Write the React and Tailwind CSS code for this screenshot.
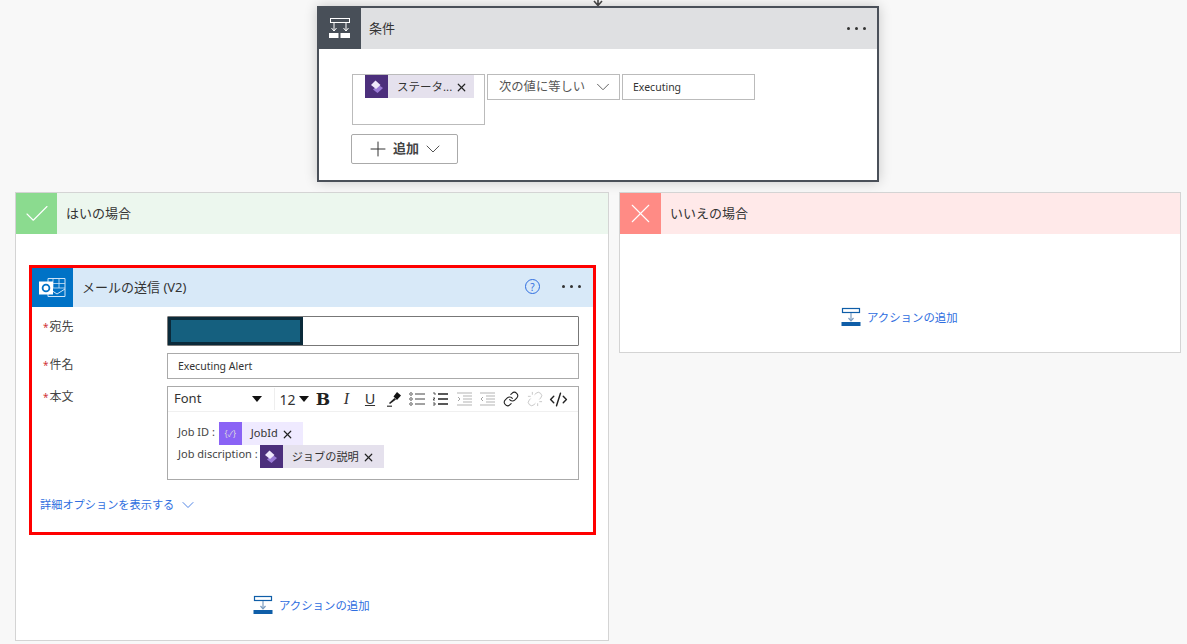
import { ChevronDown, Check, X, Plus, Link, Unlink, CodeXml } from 'lucide-react';

const FONT = "font-['Noto_Sans','Noto_Sans_CJK_JP',sans-serif]";

const PowerAppsIcon = () => (
  <svg width="14" height="14" viewBox="0 0 14 14">
    <path d="M8 4.5 L13 8 L7.5 13 L3 9.5 Z" fill="#9a7bd6" />
    <path d="M5.5 0.5 L10.5 5 L6 9 L1 5 Z" fill="#efe8fb" />
  </svg>
);

const ActionIcon = () => (
  <svg width="20" height="20" viewBox="0 0 20 20" className="shrink-0">
    <rect x="1.5" y="1.5" width="17" height="4" fill="none" stroke="#0f5ea8" strokeWidth="1.2" />
    <path d="M10 6 V13.5" stroke="#7a9cc0" strokeWidth="1.2" />
    <path d="M7.5 11 L10 13.8 L12.5 11" fill="none" stroke="#7a9cc0" strokeWidth="1.2" />
    <rect x="0.5" y="15" width="19" height="4" fill="#0f5ea8" />
  </svg>
);

const ConditionIcon = () => (
  <svg width="24" height="24" viewBox="0 0 24 24">
    <rect x="2.5" y="1.5" width="19" height="4" fill="none" stroke="#fff" strokeWidth="1" />
    <path d="M6 6 V14 M18 6 V14" stroke="#fff" strokeWidth="1" />
    <path d="M3.5 11 L6 14 L8.5 11 M15.5 11 L18 14 L20.5 11" fill="none" stroke="#fff" strokeWidth="1" />
    <rect x="1" y="16" width="9.5" height="5" fill="#fff" />
    <rect x="12.5" y="16" width="9.5" height="5" fill="#fff" />
  </svg>
);

const OutlookIcon = () => (
  <svg width="27" height="24" viewBox="0 0 27 24">
    <path d="M9 2.5 H26 V20.5 H9 Z" fill="none" stroke="#cfe4f7" strokeWidth="1" />
    <path d="M14 3 V12 M20 3 V12 M14 7.5 H26 M14 12 H26" stroke="#cfe4f7" strokeWidth="0.8" />
    <path d="M12 14 L18 18 L26 13" fill="none" stroke="#cfe4f7" strokeWidth="1" />
    <rect x="0" y="5.5" width="14" height="13" fill="#fff" />
    <circle cx="7" cy="12" r="3.4" fill="none" stroke="#0072c6" strokeWidth="1.8" />
  </svg>
);

const Dots = ({ color = '#333' }) => (
  <div className="flex gap-[5px]">
    {[0, 1, 2].map((i) => (
      <span key={i} className="w-[3px] h-[3px] rounded-full" style={{ backgroundColor: color }} />
    ))}
  </div>
);

const Token = ({ label, width, textClass }) => (
  <div className="flex items-center bg-[#e5e1ed] h-[23px]" style={{ width }}>
    <div className="w-[23px] h-[23px] bg-[#4c2f7c] flex items-center justify-center shrink-0">
      <PowerAppsIcon />
    </div>
    <span className={`ml-[9px] leading-none text-[#333] whitespace-nowrap ${textClass}`}>{label}</span>
    <X size={13} strokeWidth={2.2} className="ml-[3px] text-[#222] mt-[2px]" />
  </div>
);

const AddAction = ({ className }) => (
  <div className={`flex items-center gap-[6px] ${className}`}>
    <ActionIcon />
    <span className="text-[11.4px] mt-[1px] text-[#2f6ee0]">アクションの追加</span>
  </div>
);

const ToolBtn = ({ children, className = '' }) => (
  <div className={`h-[22px] w-[22px] flex items-center justify-center bg-white shrink-0 ${className}`}>{children}</div>
);

const ListIcon = ({ color = '#444' }) => (
  <svg width="17" height="16" viewBox="0 0 17 16">
    <circle cx="2" cy="3" r="1.3" fill="none" stroke={color} strokeWidth="0.8" />
    <circle cx="2" cy="8" r="1.3" fill="none" stroke={color} strokeWidth="0.8" />
    <circle cx="2" cy="13" r="1.3" fill="none" stroke={color} strokeWidth="0.8" />
    <path d="M6 3 H16 M6 8 H16 M6 13 H16" stroke={color} strokeWidth="1" />
  </svg>
);

const NumListIcon = () => (
  <svg width="17" height="16" viewBox="0 0 17 16">
    <path d="M1 2 H3 V4 M1 7 H3 L1 9 H3 M1 12 H3 V14 H1" fill="none" stroke="#333" strokeWidth="0.8" />
    <path d="M6 3 H16 M6 8 H16 M6 13 H16" stroke="#222" strokeWidth="1.3" />
  </svg>
);

const IndentIcon = ({ flip }) => (
  <svg width="17" height="16" viewBox="0 0 17 16">
    <path d="M1 2 H16 M7 5 H16 M7 8 H16 M7 11 H16 M1 14 H16" stroke="#aaa" strokeWidth="0.9" />
    <path d={flip ? 'M4 6 L2 8 L4 10' : 'M2 6 L4 8 L2 10'} fill="none" stroke="#999" strokeWidth="0.9" />
  </svg>
);

const PenIcon = () => (
  <svg width="16" height="16" viewBox="0 0 16 16">
    <path d="M11 1 L15 4.5 L11 9 L7.5 5.5 Z" fill="#111" />
    <path d="M8.5 7 L10 8.5 L4 13 L3 12 Z" fill="#222" />
    <path d="M1 15.2 H6" stroke="#333" strokeWidth="1.2" />
  </svg>
);

const Label = ({ text, className = 'pt-[2px]' }) => (
  <div className={`w-[135px] text-[12px] text-[#444] pl-[11px] shrink-0 ${className}`}>
    <span className="text-[#d13438] text-[10px] mr-[1px]">*</span>
    {text}
  </div>
);

const App = () => {
  return (
    <div className={`w-[1187px] h-[644px] overflow-hidden bg-[#f8f8f8] ${FONT}`}>
      <div className="h-[6px] pl-[591px]">
        <svg width="14" height="6" viewBox="0 0 14 6" className="block">
          <path d="M7 0 V5 M3 1 L7 5.5 L11 1" fill="none" stroke="#444" strokeWidth="1.6" />
        </svg>
      </div>

      {/* condition */}
      <div className="ml-[317px] w-[562px] h-[176px] border-2 border-[#4a5059] bg-white shadow-[0_0_12px_rgba(0,0,0,0.2)]">
        <div className="h-[41px] flex items-center bg-[#dfe0e2]">
          <div className="w-[42px] h-[41px] bg-[#484f58] flex items-center justify-center">
            <ConditionIcon />
          </div>
          <span className="ml-[8px] text-[13px] text-[#333]">条件</span>
          <div className="ml-auto mr-[11px]">
            <Dots />
          </div>
        </div>
        <div className="pl-[32px] pt-[25px]">
          <div className="flex items-start gap-[2px] pl-[1px]">
            <div className="w-[133px] h-[51px] border border-[#bbb] pl-[12px]">
              <Token label="ステータ..." width={109} textClass="text-[11.5px]" />
            </div>
            <div className="w-[133px] h-[26px] border border-[#bbb] flex items-center pl-[11px] pr-[5px] text-[12.3px] text-[#555]">
              次の値に等しい
              <ChevronDown size={22} strokeWidth={1} className="ml-auto text-[#555]" />
            </div>
            <div className="w-[133px] h-[26px] border border-[#bbb] flex items-center pl-[10px] pt-[1px] text-[10.5px] text-[#333]">
              Executing
            </div>
          </div>
          <div className="mt-[9px] w-[107px] h-[30px] border border-[#aaa] rounded-[2px] flex items-center pl-[14px]">
            <Plus size={24} strokeWidth={1} className="text-[#333]" />
            <span className="ml-[3px] text-[13px] font-bold text-[#444]">追加</span>
            <ChevronDown size={24} strokeWidth={1} className="ml-[2px] text-[#555]" />
          </div>
        </div>
      </div>

      {/* branches */}
      <div className="mt-[10px] pl-[15px] flex items-start gap-[10px]">
        <div className="w-[594px] h-[449px] border border-[#d4d4d4] bg-white flex flex-col">
          <div className="h-[41px] bg-[#ecf7ee] flex items-center">
            <div className="w-[41px] h-[41px] bg-[#8bdb8f] flex items-center justify-center">
              <Check size={30} strokeWidth={0.9} className="text-white" />
            </div>
            <span className="ml-[9px] text-[13px] text-[#333]">はいの場合</span>
          </div>

          <div className="mt-[31px] ml-[13px] w-[567px] h-[270px] border-[3px] border-[#ff0000] flex flex-col">
            <div className="h-[39px] bg-[#d8e9f8] flex items-center shrink-0">
              <div className="w-[41px] h-[39px] bg-[#0072c6] flex items-center justify-center">
                <OutlookIcon />
              </div>
              <span className="ml-[9px] text-[13px] text-[#333]">メールの送信 (V2)</span>
              <div className="ml-auto mb-[2px] w-[15px] h-[15px] rounded-full border border-[#2f6ee0] text-[#2f6ee0] text-[10px] leading-none flex items-center justify-center">
                ?
              </div>
              <div className="ml-[22px] mr-[12px] mb-[2px]">
                <Dots />
              </div>
            </div>

            <div className="flex flex-col pt-[9px] pr-[14px]">
              <div className="flex items-start">
                <Label text="宛先" />
                <div className="flex-1 h-[30px] border border-[#777] rounded-[1px] flex items-center">
                  <div className="w-[135px] h-[28px] bg-[#15607f] border-[3px] border-[#0b2a3a]" />
                </div>
              </div>
              <div className="flex items-start mt-[7px]">
                <Label text="件名" className="pt-[3px]" />
                <div className="flex-1 h-[26px] border border-[#aaa] flex items-center pl-[10px] pt-[2px] text-[10.5px] text-[#333]">
                  Executing Alert
                </div>
              </div>
              <div className="flex items-start mt-[7px]">
                <Label text="本文" />
                <div className="flex-1 h-[94px] border border-[#aaa] flex flex-col">
                  <div className="h-[25px] flex items-center gap-[1.5px] pl-[2px] border-b border-[#f0f0f0] text-[#333] shrink-0">
                    <div className="w-[102px] h-[22px] flex items-center pl-[4px] pr-[10px] text-[13px] shrink-0">
                      Font
                      <span className="ml-auto w-0 h-0 border-x-[5px] border-x-transparent border-t-[6px] border-t-[#111]" />
                    </div>
                    <div className="w-[37px] h-[22px] flex items-center pl-[5px] text-[14px] border-l border-[#eee] shrink-0">
                      12
                      <span className="ml-[3px] w-0 h-0 border-x-[5px] border-x-transparent border-t-[6px] border-t-[#111]" />
                    </div>
                    <ToolBtn><span className="font-['DejaVu_Serif'] font-bold text-[17px] leading-none text-[#222]">B</span></ToolBtn>
                    <ToolBtn><span className="font-['Liberation_Serif'] italic text-[16px] leading-none text-[#333]">I</span></ToolBtn>
                    <ToolBtn><span className="font-['Liberation_Sans'] underline text-[14px] leading-none text-[#333]">U</span></ToolBtn>
                    <ToolBtn><PenIcon /></ToolBtn>
                    <ToolBtn><ListIcon /></ToolBtn>
                    <ToolBtn><NumListIcon /></ToolBtn>
                    <ToolBtn><IndentIcon /></ToolBtn>
                    <ToolBtn><IndentIcon flip /></ToolBtn>
                    <ToolBtn><Link size={16} strokeWidth={1.6} className="text-[#222]" /></ToolBtn>
                    <ToolBtn><Unlink size={16} strokeWidth={1.2} className="text-[#bbb]" /></ToolBtn>
                    <ToolBtn><CodeXml size={19} strokeWidth={1.8} className="text-[#222]" /></ToolBtn>
                  </div>
                  <div className="pl-[10px] pt-[10px] text-[11px] text-[#444]">
                    <div className="flex items-center h-[23px]">
                      <span className="mb-[2px]">Job ID :</span>
                      <div className="ml-[4px] w-[84px] h-[23px] bg-[#efeaff] flex items-center">
                        <div className="w-[23px] h-[23px] bg-[#8a63f5] flex items-center justify-center text-[8px] text-[#ddd]">
                          {'{✓}'}
                        </div>
                        <span className="ml-[9px] text-[11px] text-[#333]">JobId</span>
                        <X size={13} strokeWidth={2.2} className="ml-[3px] text-[#222] mt-[2px]" />
                      </div>
                    </div>
                    <div className="flex items-center h-[23px]">
                      <span className="mb-[4px]">Job discription :</span>
                      <div className="ml-[2px]">
                        <Token label="ジョブの説明" width={124} textClass="text-[11.2px]" />
                      </div>
                    </div>
                  </div>
                </div>
              </div>
              <div className="mt-[15px] pl-[8px] flex items-center text-[11.2px] text-[#2f6ee0]">
                詳細オプションを表示する
                <ChevronDown size={20} strokeWidth={1} className="ml-[4px]" />
              </div>
            </div>
          </div>

          <AddAction className="mt-[60px] ml-[237px]" />
        </div>

        <div className="w-[562px] h-[161px] border border-[#d4d4d4] bg-white flex flex-col">
          <div className="h-[41px] bg-[#ffe9e9] flex items-center">
            <div className="w-[41px] h-[41px] bg-[#ff8b85] flex items-center justify-center">
              <X size={33} strokeWidth={0.8} className="text-white" />
            </div>
            <span className="ml-[9px] text-[13px] text-[#333]">いいえの場合</span>
          </div>
          <AddAction className="mt-[73px] ml-[221px]" />
        </div>
      </div>
    </div>
  );
};

export default App;
